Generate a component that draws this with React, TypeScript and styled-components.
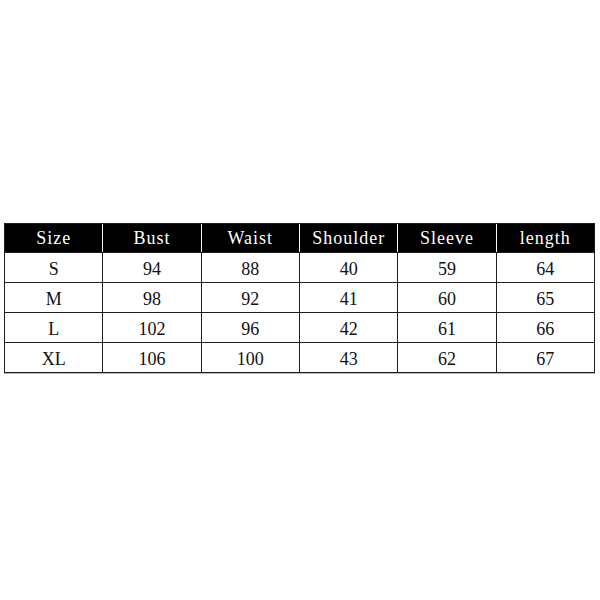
import styled, { createGlobalStyle } from "styled-components";

const GlobalStyle = createGlobalStyle`
  html, body {
    margin: 0;
    padding: 0;
    background: #ffffff;
  }
`;

const Page = styled.div`
  width: 600px;
  height: 600px;
  box-sizing: border-box;
  padding: 223px 5px 0 4px;
`;

const Table = styled.div`
  border: 1px solid #1e1e1e;
  box-shadow: 0 1px 0 #b8b8b8;
  background: #1e1e1e;
  display: flex;
  flex-direction: column;
  gap: 1px;
`;

// header row - black cells split by white lines
const HeadRow = styled.div`
  display: grid;
  grid-template-columns: repeat(6, 1fr);
  gap: 1px;
  background: #f4f4f4;
`;

const HeadCell = styled.div`
  height: 28px;
  background: #000;
  color: #fff;
  font-family: "Liberation Serif", "DejaVu Serif", serif;
  font-size: 18px;
  letter-spacing: 1px;
  display: flex;
  align-items: center;
  justify-content: center;
  padding-top: 1px;
  box-sizing: border-box;
`;

const Row = styled.div`
  display: grid;
  grid-template-columns: repeat(6, 1fr);
  gap: 1px;
  background: #1e1e1e;
`;

const Cell = styled.div`
  height: 29px;
  background: #fff;
  color: #111;
  font-family: "Liberation Serif", "DejaVu Serif", serif;
  font-size: 18px;
  display: flex;
  align-items: center;
  justify-content: center;
  padding-top: 3px;
  box-sizing: border-box;
`;

const headers = ["Size", "Bust", "Waist", "Shoulder", "Sleeve", "length"];

const rows = [
  ["S", "94", "88", "40", "59", "64"],
  ["M", "98", "92", "41", "60", "65"],
  ["L", "102", "96", "42", "61", "66"],
  ["XL", "106", "100", "43", "62", "67"],
];

export default function App() {
  return (
    <>
      <GlobalStyle />
      <Page>
        <Table>
          <HeadRow>
            {headers.map((h) => (
              <HeadCell key={h}>{h}</HeadCell>
            ))}
          </HeadRow>
          {rows.map((r) => (
            <Row key={r[0]}>
              {r.map((v, i) => (
                <Cell key={i}>{v}</Cell>
              ))}
            </Row>
          ))}
        </Table>
      </Page>
    </>
  );
}
